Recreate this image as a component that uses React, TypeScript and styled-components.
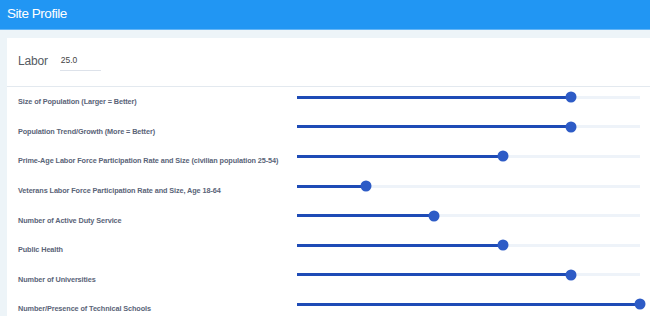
import React from "react";
import styled, { createGlobalStyle } from "styled-components";

const GlobalStyle = createGlobalStyle`
  body {
    margin: 0;
    background-color: #edf4f8;
    font-family: "Liberation Sans", Arial, sans-serif;
  }
`;

const Header = styled.div`
  height: 30px;
  background-color: #2196f3;
  border-bottom: 1px solid #64b5f6;
  display: flex;
  align-items: center;
  padding-left: 7px;
  box-sizing: border-box;
`;

const Title = styled.div`
  color: #fff;
  font-size: 13.5px;
  letter-spacing: -0.45px;
  margin-top: -2px;
`;

const Card = styled.div`
  margin: 8px 0 0 7px;
  background-color: #fff;
`;

const Top = styled.div`
  height: 48px;
  display: flex;
  align-items: center;
  padding-left: 11px;
  gap: 12px;
  border-bottom: 1px solid #e3e9ef;
`;

const Category = styled.div`
  font-size: 12px;
  letter-spacing: -0.2px;
  color: #555b63;
  margin-top: -3px;
`;

const Weight = styled.div`
  width: 40px;
  font-size: 8.5px;
  color: #444;
  padding: 0 0 5px 1px;
  border-bottom: 1px solid #dde2ea;
  margin-top: 2px;
`;

const Row = styled.div`
  height: 29.6px;
  display: flex;
  align-items: center;
  padding-left: 11px;
`;

const Label = styled.div`
  width: 279px;
  font-size: 7.3px;
  font-weight: 700;
  color: #5a6478;
  letter-spacing: -0.1px;
`;

const Slider = styled.div`
  position: relative;
  width: 343px;
  height: 3px;
  margin-bottom: 9px;
  background-color: #eef3f9;
`;

const Fill = styled.div`
  position: absolute;
  left: 0;
  top: 0;
  height: 3px;
  background-color: #1e4bb6;
`;

const Thumb = styled.div`
  position: absolute;
  top: 50%;
  width: 11px;
  height: 11px;
  border-radius: 50%;
  background-color: #2d5bc6;
  transform: translate(-50%, -50%);
`;

const factors = [
  { label: "Size of Population (Larger = Better)", value: 4 },
  { label: "Population Trend/Growth (More = Better)", value: 4 },
  {
    label:
      "Prime-Age Labor Force Participation Rate and Size (civilian population 25-54)",
    value: 3,
  },
  { label: "Veterans Labor Force Participation Rate and Size, Age 18-64", value: 1 },
  { label: "Number of Active Duty  Service", value: 2 },
  { label: "Public Health", value: 3 },
  { label: "Number of Universities", value: 4 },
  { label: "Number/Presence of Technical Schools", value: 5 },
];

const App: React.FC = () => {
  return (
    <>
      <GlobalStyle />
      <Header>
        <Title>Site Profile</Title>
      </Header>
      <Card>
        <Top>
          <Category>Labor</Category>
          <Weight>25.0</Weight>
        </Top>
        {factors.map((factor) => {
          const pct = (factor.value / 5) * 100;
          return (
            <Row key={factor.label}>
              <Label>{factor.label}</Label>
              <Slider>
                <Fill style={{ width: `${pct}%` }} />
                <Thumb style={{ left: `${pct}%` }} />
              </Slider>
            </Row>
          );
        })}
      </Card>
    </>
  );
};

export default App;
